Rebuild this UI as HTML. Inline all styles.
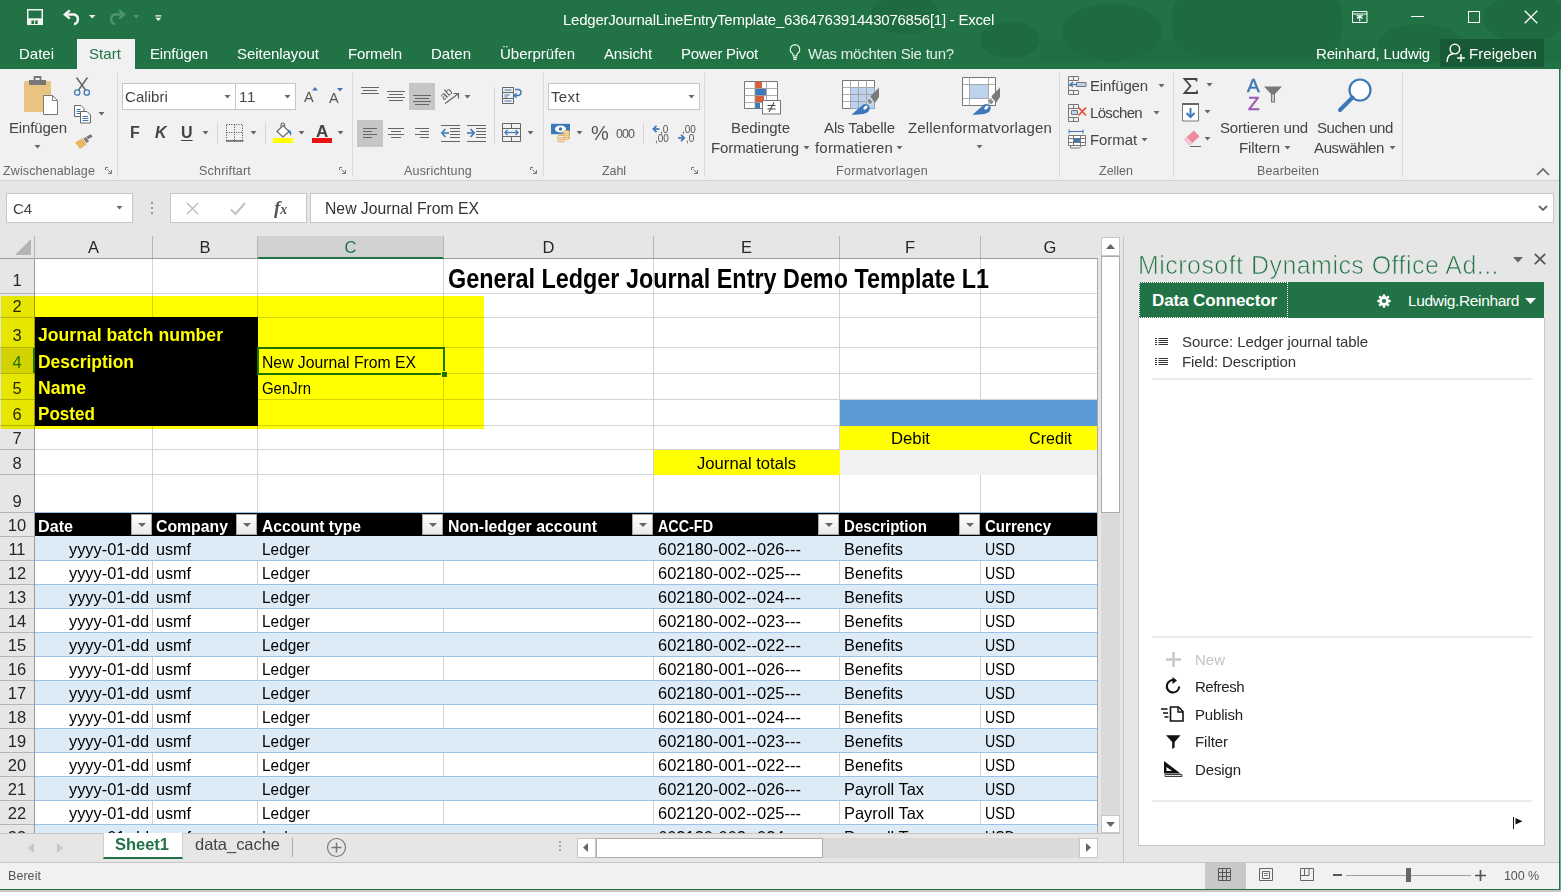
<!DOCTYPE html>
<html lang="de">
<head>
<meta charset="utf-8">
<title>LedgerJournalLineEntryTemplate - Excel</title>
<style>
*{box-sizing:border-box;margin:0;padding:0}
html,body{width:1561px;height:892px;overflow:hidden}
body{position:relative;background:#e6e6e6;font-family:"Liberation Sans",sans-serif;color:#444;font-size:15px}
.a{position:absolute;white-space:nowrap}
.t{position:absolute;white-space:nowrap;line-height:1}
svg{position:absolute;overflow:visible}
#title{left:0;top:0;width:1561px;height:69px;background:#217346;overflow:hidden}
#ribbon{left:0;top:69px;width:1561px;height:112px;background:#f1f1f1;border-bottom:1px solid #d2d2d2}
.tab{color:#fff;font-size:15px;top:46px}
.rl{font-size:14.5px;color:#444}
.gl{font-size:12.5px;color:#666;top:96px}
.sep{position:absolute;top:4px;width:1px;height:104px;background:#dadada}
.cal{font-size:16.5px;color:#000;transform-origin:0 0}
.calb{font-size:16.5px;font-weight:bold;transform-origin:0 0}
.hl{position:absolute;height:1px;background:#d4d4d4}
.vl{position:absolute;width:1px;background:#d4d4d4}
.rh{position:absolute;left:0;width:34px;text-align:center;font-size:16.5px;color:#262626;line-height:1}
.ch{position:absolute;top:239px;text-align:center;font-size:16.5px;color:#262626;line-height:1}
.fb{position:absolute;width:21px;height:21px;background:linear-gradient(#fff,#e9e9e9);border:1px solid #a6a6a6}
.fb:after{content:"";position:absolute;left:6px;top:8px;border:4px solid transparent;border-top:4px solid #666;border-bottom:0}
</style>
</head>
<body>
<div id="title" class="a">
 <svg width="1561" height="69" style="left:0;top:0">
  <g fill="#1e6b40">
   <ellipse cx="905" cy="14" rx="34" ry="20"/><ellipse cx="1010" cy="40" rx="30" ry="18"/>
   <ellipse cx="1112" cy="32" rx="50" ry="29"/>
   <rect x="1172" y="-10" width="170" height="66" rx="26"/>
   <ellipse cx="1420" cy="44" rx="42" ry="20"/><ellipse cx="1525" cy="18" rx="42" ry="24"/>
   <rect x="1040" y="40" width="521" height="22" opacity=".5"/>
  </g>
 </svg>
 <!-- QAT -->
 <svg width="16" height="16" viewBox="0 0 16 16" style="left:27px;top:9px"><path d="M.75 .75h14.500v14.500h-14.500z" fill="none" stroke="#f3f3f3" stroke-width="1.500"/><path d="M1 9.300h14v6h-14z" fill="#f3f3f3"/><path d="M4.400 11.500h6.300v3.400h-6.300z" fill="#217346"/><path d="M7 11.500h1.100v3.400h-1.100z" fill="#f3f3f3"/></svg>
 <svg width="19" height="16" viewBox="0 0 19 16" style="left:63px;top:9px"><path d="M6.800 1.300 1.800 5.500 6.800 9.700" fill="none" stroke="#f3f3f3" stroke-width="2.400"/><path d="M2.500 5.500H11.500a5 5 0 0 1 0 9.500H11" fill="none" stroke="#f3f3f3" stroke-width="2.400"/></svg>
 <svg width="7" height="4" viewBox="0 0 7 4" style="left:89px;top:15px"><path d="M0 0h6.500l-3.250 3.500z" fill="#f3f3f3"/></svg>
 <svg width="19" height="16" viewBox="0 0 19 16" style="left:107px;top:9px"><g transform="translate(19,0) scale(-1,1)"><path d="M6.800 1.300 1.800 5.500 6.800 9.700" fill="none" stroke="#4f9470" stroke-width="2.400"/><path d="M2.500 5.500H11.500a5 5 0 0 1 0 9.500H11" fill="none" stroke="#4f9470" stroke-width="2.400"/></g></svg>
 <svg width="7" height="4" viewBox="0 0 7 4" style="left:133px;top:15px"><path d="M0 0h6.500l-3.250 3.500z" fill="#4f9470"/></svg>
 <svg width="7" height="7" viewBox="0 0 7 7" style="left:155px;top:15px"><path d="M.3 .2h6v1.200h-6z M.3 2.800h6l-3 3.300z" fill="#f3f3f3"/></svg>
 <div class="t" id="ttl" style="left:563px;top:12px;color:#fff;font-size:15px;letter-spacing:-0.239px;">LedgerJournalLineEntryTemplate_636476391443076856[1] - Excel</div>
 <!-- window buttons -->
 <svg width="16" height="12" viewBox="0 0 16 12" style="left:1352px;top:11px"><path d="M.5 .5h14.500v11h-14.500z" fill="none" stroke="#fff" stroke-width="1"/><path d="M.5 3h14.500" stroke="#fff"/><path d="M7.750 10.500V5M5 7.500 7.750 5 10.500 7.500M4.500 4.700h6.500" fill="none" stroke="#fff" stroke-width="1.100"/></svg>
 <div class="a" style="left:1411px;top:16px;width:13px;height:1.4px;background:#fff"></div>
 <div class="a" style="left:1468px;top:11px;width:12px;height:12px;border:1.3px solid #fff"></div>
 <svg width="14" height="14" viewBox="0 0 14 14" style="left:1524px;top:10px"><path d="M.7 .7 13.300 13.300M13.300 .7 .7 13.300" stroke="#fff" stroke-width="1.3"/></svg>
 <!-- tabs -->
 <div class="a" style="left:77px;top:39px;width:58px;height:30px;background:#f1f1f1"></div>
 <div class="t tab" id="tb0" style="left:19px;letter-spacing:-0.006px;">Datei</div>
 <div class="t tab" id="tb1" style="left:89px;letter-spacing:0.062px;;color:#217346">Start</div>
 <div class="t tab" id="tb2" style="left:150px;letter-spacing:-0.152px;">Einfügen</div>
 <div class="t tab" id="tb3" style="left:237px;letter-spacing:-0.047px;">Seitenlayout</div>
 <div class="t tab" id="tb4" style="left:348px;letter-spacing:-0.145px;">Formeln</div>
 <div class="t tab" id="tb5" style="left:431px;letter-spacing:-0.006px;">Daten</div>
 <div class="t tab" id="tb6" style="left:500px;letter-spacing:-0.005px;">Überprüfen</div>
 <div class="t tab" id="tb7" style="left:604px;letter-spacing:-0.172px;">Ansicht</div>
 <div class="t tab" id="tb8" style="left:681px;letter-spacing:-0.277px;">Power Pivot</div>
 <svg width="12" height="18" viewBox="0 0 12 18" style="left:789px;top:44px"><path d="M6 .8a4.700 4.700 0 0 0-2.600 8.600c.6.600.8 1.200.8 2.600h3.600c0-1.400.2-2 .8-2.600A4.700 4.700 0 0 0 6 .8z" fill="none" stroke="#fff" stroke-width="1.1"/><path d="M4.200 13.600h3.600M4.500 15.400h3" stroke="#fff" stroke-width="1.100"/></svg>
 <div class="t tab" id="tb9" style="left:808px;letter-spacing:-0.218px;;color:#e3efe8">Was möchten Sie tun?</div>
 <div class="t tab" id="tb10" style="left:1316px;letter-spacing:-0.172px;">Reinhard, Ludwig</div>
 <div class="a" style="left:1440px;top:39px;width:104px;height:28px;background:#185a35"></div>
 <svg width="20" height="20" viewBox="0 0 18 18" style="left:1446px;top:43px"><circle cx="8" cy="5.500" r="4.300" fill="none" stroke="#fff" stroke-width="1.300"/><path d="M1 17c0-4.500 2.500-7 5.500-7.300M10 10.200" fill="none" stroke="#fff" stroke-width="1.300"/><path d="M13.500 10v7M10 13.500h7" stroke="#fff" stroke-width="1.300"/></svg>
 <div class="t tab" id="tb11" style="left:1469px;letter-spacing:0.050px;">Freigeben</div>
</div>
<div id="ribbon" class="a">
<!-- ===== Zwischenablage ===== -->
<svg width="36" height="40" viewBox="0 0 36 40" style="left:23px;top:7px">
 <rect x="1" y="5" width="27" height="31" rx="1.500" fill="#eac282"/>
 <path d="M6 4h17v5h-17z" fill="#777"/><path d="M11.500 1h6v4h-6z" fill="none" stroke="#777" stroke-width="1.800"/>
 <path d="M20.500 19.500h9l5 5v14h-14z" fill="#fff" stroke="#777" stroke-width="1"/><path d="M29.500 19.500v5h5" fill="none" stroke="#777" stroke-width="1"/>
</svg>
<div class="t rl" style="left:9px;top:51px;font-size:15px;letter-spacing:-0.152px;">Einfügen</div>
<svg width="8" height="5" viewBox="0 0 8 5" style="left:34px;top:76px"><path d="M.5 0h6l-3 3.500z" fill="#666"/></svg>
<svg width="18" height="20" viewBox="0 0 18 20" style="left:73px;top:8px">
 <path d="M3.500 .5 12.500 13M14.500 .5 5.500 13" stroke="#666" stroke-width="1.500" fill="none"/>
 <circle cx="4.200" cy="15.500" r="2.700" fill="none" stroke="#3f78b8" stroke-width="1.300"/><circle cx="13.800" cy="15.500" r="2.700" fill="none" stroke="#3f78b8" stroke-width="1.300"/>
</svg>
<svg width="18" height="19" viewBox="0 0 18 19" style="left:74px;top:36px">
 <path d="M.5 .5h6.500l3 3v8h-9.500z" fill="#fff" stroke="#666"/><path d="M2.500 4.500h4M2.500 6.500h5M2.500 8.500h5" stroke="#3f78b8"/>
 <path d="M6.500 6.500h6.500l3.500 3.500v8h-10z" fill="#fff" stroke="#666"/><path d="M8.500 11.500h5.500M8.500 13.500h6M8.500 15.500h6" stroke="#3f78b8"/>
</svg>
<svg width="8" height="5" viewBox="0 0 8 5" style="left:98px;top:43px"><path d="M.5 0h6l-3 3.500z" fill="#666"/></svg>
<svg width="18" height="16" viewBox="0 0 18 16" style="left:75px;top:65px">
 <path d="M0 8.500 7.500 4l4 6.500-6.500 4.500z" fill="#eab765"/><path d="M8.500 4.500 11 3l3 4.500-2.500 1.500z" fill="#777"/><path d="M11.500 2.500 16 .3l1.500 2.500-4.500 2.500z" fill="#777"/>
</svg>
<div class="t gl" style="left:3px;letter-spacing:0.118px;">Zwischenablage</div>
<svg class="ln" width="7" height="7" viewBox="0 0 7 7" style="left:105px;top:98px"><path d="M.5 3V.5H3" fill="none" stroke="#777"/><path d="M2.500 2.500 6 6M6.500 3v3.500H3" fill="none" stroke="#777"/></svg>
<div class="sep" style="left:117px"></div>
<!-- ===== Schriftart ===== -->
<div class="a" style="left:122px;top:14px;width:114px;height:27px;background:#fff;border:1px solid #c6c6c6"></div>
<div class="a" style="left:236px;top:14px;width:60px;height:27px;background:#fff;border:1px solid #c6c6c6;border-left:0"></div>
<div class="t" style="left:125px;top:20px;font-size:15px;color:#444;letter-spacing:0.069px;">Calibri</div>
<div class="t" style="left:239px;top:20px;font-size:15px;color:#444;letter-spacing:0.711px;">11</div>
<svg width="8" height="5" viewBox="0 0 8 5" style="left:224px;top:26px"><path d="M.5 0h6l-3 3.500z" fill="#666"/></svg>
<svg width="8" height="5" viewBox="0 0 8 5" style="left:284px;top:26px"><path d="M.5 0h6l-3 3.500z" fill="#666"/></svg>
<div class="t" style="left:304px;top:20.5px;font-size:14.500px;color:#555">A</div>
<svg width="6" height="4" viewBox="0 0 6 4" style="left:312px;top:18px"><path d="M0 3.500h6l-3-3.500z" fill="#3f78b8"/></svg>
<div class="t" style="left:329px;top:21.5px;font-size:14.500px;color:#555">A</div>
<svg width="6" height="4" viewBox="0 0 6 4" style="left:337px;top:19px"><path d="M0 0h6l-3 3.500z" fill="#3f78b8"/></svg>
<div class="t" style="left:130px;top:56px;font-size:16px;font-weight:bold;color:#444">F</div>
<div class="t" style="left:155px;top:56px;font-size:16px;font-weight:bold;font-style:italic;color:#444">K</div>
<div class="t" style="left:181px;top:56px;font-size:16px;font-weight:bold;color:#444;text-decoration:underline;text-underline-offset:2px">U</div>
<svg width="8" height="5" viewBox="0 0 8 5" style="left:202px;top:62px"><path d="M.5 0h6l-3 3.500z" fill="#666"/></svg>
<div class="a" style="left:217px;top:54px;width:1px;height:21px;background:#d4d4d4"></div>
<svg width="18" height="18" viewBox="0 0 18 18" style="left:226px;top:55px"><path d="M.5 .5h16v16h-16zM8.500 .5v16M.5 8.500h16" fill="none" stroke="#444" stroke-dasharray="1 1.400"/><path d="M0 17h17.500" stroke="#555" stroke-width="1.300"/></svg>
<svg width="8" height="5" viewBox="0 0 8 5" style="left:250px;top:62px"><path d="M.5 0h6l-3 3.500z" fill="#666"/></svg>
<div class="a" style="left:265px;top:54px;width:1px;height:21px;background:#d4d4d4"></div>
<svg width="22" height="16" viewBox="0 0 22 16" style="left:273px;top:54px"><path d="M4 8.500 10 2.500l6 6-6 5.500z" fill="#fff" stroke="#666" stroke-width="1.100"/><path d="M8 4.500V1.800a1.800 1.800 0 0 1 3.600 0V3.500" fill="none" stroke="#666" stroke-width="1.100"/><path d="M15.500 6.500c2.500 1 3.500 3.500 2.500 6.500-1.500-2-1.500-3.500-3.500-5z" fill="#3f78b8"/></svg>
<div class="a" style="left:273px;top:69px;width:20px;height:5px;background:#ffff00"></div>
<svg width="8" height="5" viewBox="0 0 8 5" style="left:298px;top:62px"><path d="M.5 0h6l-3 3.500z" fill="#666"/></svg>
<div class="t" style="left:316px;top:54px;font-size:17px;font-weight:bold;color:#444">A</div>
<div class="a" style="left:312px;top:69px;width:20px;height:5px;background:#ee1111"></div>
<svg width="8" height="5" viewBox="0 0 8 5" style="left:337px;top:62px"><path d="M.5 0h6l-3 3.500z" fill="#666"/></svg>
<div class="t gl" style="left:199px;letter-spacing:0.198px;">Schriftart</div>
<svg width="7" height="7" viewBox="0 0 7 7" style="left:339px;top:98px"><path d="M.5 3V.5H3" fill="none" stroke="#777"/><path d="M2.500 2.500 6 6M6.500 3v3.500H3" fill="none" stroke="#777"/></svg>
<div class="sep" style="left:352px"></div>
<!-- ===== Ausrichtung ===== -->
<div class="a" style="left:409px;top:14px;width:26px;height:27px;background:#c6c6c6"></div>
<div class="a" style="left:357px;top:51px;width:26px;height:27px;background:#c6c6c6"></div>
<svg width="18" height="8" viewBox="0 0 18 8" style="left:361px;top:18px"><path d="M0 .5h18M2 3.500h14M0 6.500h18" stroke="#666" stroke-width="1"/></svg>
<svg width="18" height="10" viewBox="0 0 18 10" style="left:387px;top:22px"><path d="M0 .5h18M2 3.500h14M0 6.500h18M2 9.500h14" stroke="#666"/></svg>
<svg width="18" height="10" viewBox="0 0 18 10" style="left:413px;top:26px"><path d="M0 .5h18M2 3.500h14M0 6.500h18M2 9.500h14" stroke="#666"/></svg>
<svg width="20" height="18" viewBox="0 0 20 18" style="left:441px;top:18px"><text x="0" y="10" font-size="11" fill="#555" font-family="Liberation Sans,sans-serif" transform="rotate(-40 6 8)">ab</text><path d="M4 16.500 17 7M12.500 6.500h5v5" fill="none" stroke="#666" stroke-width="1.200"/></svg>
<svg width="8" height="5" viewBox="0 0 8 5" style="left:464px;top:26px"><path d="M.5 0h6l-3 3.500z" fill="#666"/></svg>
<div class="a" style="left:494px;top:18px;width:1px;height:56px;background:#d4d4d4"></div>
<svg width="20" height="18" viewBox="0 0 20 18" style="left:502px;top:18px"><path d="M.5 .5h11v5h-11zM.5 5.500h11v6h-11zM.5 11.500h11v5h-11z" fill="none" stroke="#666"/><path d="M2.500 3h7M2.500 8h5M2.500 10h3M2.500 14h7" stroke="#3f78b8"/><path d="M13 2.500h3a2.500 2.500 0 0 1 0 6h-4" fill="none" stroke="#3f78b8" stroke-width="1.400"/><path d="M14.500 5.500 11 8.500l3.500 3z" fill="#3f78b8"/></svg>
<svg width="14" height="10" viewBox="0 0 14 10" style="left:363px;top:59px"><path d="M0 .5h14M0 3.500h9M0 6.500h14M0 9.500h9" stroke="#666"/></svg>
<svg width="16" height="10" viewBox="0 0 16 10" style="left:388px;top:59px"><path d="M0 .5h16M3 3.500h10M0 6.500h16M3 9.500h10" stroke="#666"/></svg>
<svg width="14" height="10" viewBox="0 0 14 10" style="left:415px;top:59px"><path d="M0 .5h14M5 3.500h9M0 6.500h14M5 9.500h9" stroke="#666"/></svg>
<svg width="19" height="17" viewBox="0 0 19 17" style="left:441px;top:56px"><path d="M0 .5h19M9 3.500h10M9 6.500h10M9 9.500h10M9 12.500h10M0 16.500h19" stroke="#666"/><path d="M1 8h7" stroke="#3f78b8" stroke-width="1.600"/><path d="M4.500 4 .8 8l3.700 4" fill="none" stroke="#3f78b8" stroke-width="1.600"/></svg>
<svg width="19" height="17" viewBox="0 0 19 17" style="left:467px;top:56px"><path d="M0 .5h19M9 3.500h10M9 6.500h10M9 9.500h10M9 12.500h10M0 16.500h19" stroke="#666"/><path d="M0 8h7" stroke="#3f78b8" stroke-width="1.600"/><path d="M3.500 4 7.200 8l-3.700 4" fill="none" stroke="#3f78b8" stroke-width="1.600"/></svg>
<svg width="20" height="19" viewBox="0 0 20 19" style="left:502px;top:54px"><path d="M.5 .5h18v18h-18zM.5 5.500h18M.5 13.500h18M9.500 .5v5M9.500 13.500v5" fill="none" stroke="#666"/><path d="M3 9.500h13" stroke="#3f78b8" stroke-width="1.300"/><path d="M5.500 7 3 9.500 5.500 12M13.500 7 16 9.500 13.500 12" fill="none" stroke="#3f78b8" stroke-width="1.300"/></svg>
<svg width="8" height="5" viewBox="0 0 8 5" style="left:527px;top:62px"><path d="M.5 0h6l-3 3.500z" fill="#666"/></svg>
<div class="t gl" style="left:404px;letter-spacing:0.180px;">Ausrichtung</div>
<svg width="7" height="7" viewBox="0 0 7 7" style="left:530px;top:98px"><path d="M.5 3V.5H3" fill="none" stroke="#777"/><path d="M2.500 2.500 6 6M6.500 3v3.500H3" fill="none" stroke="#777"/></svg>
<div class="sep" style="left:543px"></div>
<!-- ===== Zahl ===== -->
<div class="a" style="left:548px;top:14px;width:152px;height:27px;background:#fff;border:1px solid #c6c6c6"></div>
<div class="t" style="left:551px;top:20px;font-size:15px;color:#444;letter-spacing:0.371px;">Text</div>
<svg width="8" height="5" viewBox="0 0 8 5" style="left:688px;top:26px"><path d="M.5 0h6l-3 3.500z" fill="#666"/></svg>
<svg width="21" height="20" viewBox="0 0 21 20" style="left:551px;top:54px"><path d="M0 .8h19v10.400h-19z" fill="#3f78b8"/><ellipse cx="9.500" cy="6" rx="5.600" ry="3.500" fill="#fff"/><circle cx="9.500" cy="6" r="1.800" fill="#3f78b8"/><g fill="#f1f1f1" stroke="#e4a951" stroke-width="1"><ellipse cx="15.300" cy="15" rx="3.600" ry="1.300"/><ellipse cx="15.300" cy="13" rx="3.600" ry="1.300"/><ellipse cx="15.300" cy="11" rx="3.600" ry="1.300"/><ellipse cx="15.300" cy="9" rx="3.600" ry="1.300"/><ellipse cx="10" cy="17.600" rx="3.600" ry="1.300"/><ellipse cx="10" cy="15.600" rx="3.600" ry="1.300"/><ellipse cx="10" cy="13.600" rx="3.600" ry="1.300"/></g></svg>
<svg width="8" height="5" viewBox="0 0 8 5" style="left:576px;top:62px"><path d="M.5 0h6l-3 3.500z" fill="#666"/></svg>
<div class="t" style="left:591px;top:54px;font-size:20px;color:#555;letter-spacing:-0.797px;">%</div>
<div class="t" style="left:616px;top:59px;font-size:12.500px;color:#555;letter-spacing:-0.953px;">000</div>
<div class="a" style="left:643px;top:54px;width:1px;height:21px;background:#d4d4d4"></div>
<svg width="18" height="18" viewBox="0 0 18 18" style="left:652px;top:55px"><path d="M1.500 5h6" stroke="#3f78b8" stroke-width="1.700"/><path d="M4.500 1.800 1.300 5l3.200 3.200" fill="none" stroke="#3f78b8" stroke-width="1.700"/><text x="8" y="8.500" font-size="10" fill="#555" font-family="Liberation Sans,sans-serif">,0</text><text x="3" y="17.500" font-size="10" fill="#555" font-family="Liberation Sans,sans-serif">,00</text></svg>
<svg width="18" height="18" viewBox="0 0 18 18" style="left:678px;top:55px"><path d="M0 14h6" stroke="#3f78b8" stroke-width="1.700"/><path d="M3 10.800 6.200 14 3 17.200" fill="none" stroke="#3f78b8" stroke-width="1.700"/><text x="4" y="8.500" font-size="10" fill="#555" font-family="Liberation Sans,sans-serif">,00</text><text x="8" y="17.500" font-size="10" fill="#555" font-family="Liberation Sans,sans-serif">,0</text></svg>
<div class="t gl" style="left:602px;letter-spacing:-0.082px;">Zahl</div>
<svg width="7" height="7" viewBox="0 0 7 7" style="left:691px;top:98px"><path d="M.5 3V.5H3" fill="none" stroke="#777"/><path d="M2.500 2.500 6 6M6.500 3v3.500H3" fill="none" stroke="#777"/></svg>
<div class="sep" style="left:704px"></div>
<!-- ===== Formatvorlagen ===== -->
<svg width="38" height="34" viewBox="0 0 38 34" style="left:744px;top:12px">
 <path d="M.5 .5h33v27h-33z" fill="#fff" stroke="#777"/>
 <path d="M11 .5h7v7h-7z" fill="#d8603a"/><path d="M11 7.500h11v7h-11z" fill="#3f78b8"/><path d="M11 14.500h9v7h-9z" fill="#d8603a"/><path d="M11 21.500h5v6h-5z" fill="#3f78b8"/>
 <path d="M.5 7.500h33M.5 14.500h33M.5 21.500h33M11 .5v27M22.500 .5v27" fill="none" stroke="#999" stroke-width=".8"/>
 <path d="M18.500 19.500h18v13.500h-18z" fill="#fff" stroke="#777"/>
 <path d="M23.500 24.500h8M23.500 28h8M30 21.500l-5 9.500" stroke="#444" stroke-width="1.100"/>
</svg>
<div class="t rl" style="left:731px;top:51px;font-size:15px;letter-spacing:-0.027px;">Bedingte</div>
<div class="t rl" style="left:711px;top:71px;font-size:15px;letter-spacing:-0.100px;">Formatierung</div>
<svg width="8" height="5" viewBox="0 0 8 5" style="left:803px;top:77px"><path d="M.5 0h6l-3 3.500z" fill="#666"/></svg>
<svg width="40" height="36" viewBox="0 0 40 36" style="left:842px;top:11px">
 <path d="M.5 .5h32v28h-32z" fill="#fff" stroke="#777"/><path d="M8.500 7.500h24v21h-24z" fill="#bdd2ec"/>
 <path d="M.5 7.500h32M.5 14.500h32M.5 21.500h32M8.500 .5v28M16.500 .5v28M24.500 .5v28" fill="none" stroke="#999" stroke-width=".8"/>
 <g transform="translate(0,0)"><path d="M28.300 16.300 37 7.500V17L33 23z" fill="#7a7a7a"/><path d="M27.300 18l3.800 3.800-3 3-3.800-3.800z" fill="#8a8a8a" stroke="#f1f1f1" stroke-width=".9"/><path d="M9.500 34.700 21 24.500C25 22.500 29.500 26 27 30.500 25 34 20 34.700 9.500 34.700z" fill="#3f78b8"/><ellipse cx="23.400" cy="27.600" rx="2.500" ry="1.400" transform="rotate(-40 23.400 27.600)" fill="#fff"/></g>
</svg>
<div class="t rl" style="left:824px;top:51px;font-size:15px;letter-spacing:-0.116px;">Als Tabelle</div>
<div class="t rl" style="left:815px;top:71px;font-size:15px;letter-spacing:0.193px;">formatieren</div>
<svg width="8" height="5" viewBox="0 0 8 5" style="left:896px;top:77px"><path d="M.5 0h6l-3 3.500z" fill="#666"/></svg>
<svg width="40" height="38" viewBox="0 0 40 38" style="left:962px;top:8px">
 <path d="M.5 .5h33v28h-33z" fill="#fff" stroke="#777"/><path d="M7.500 7.500h19v14h-19z" fill="#bdd2ec"/>
 <path d="M.5 7.500h33M.5 21.500h33M7.500 .5v28M26.500 .5v28" fill="none" stroke="#999" stroke-width=".8"/>
 <g transform="translate(1,3)"><path d="M28.300 16.300 37 7.500V17L33 23z" fill="#7a7a7a"/><path d="M27.300 18l3.800 3.800-3 3-3.800-3.800z" fill="#8a8a8a" stroke="#f1f1f1" stroke-width=".9"/><path d="M9.500 34.700 21 24.500C25 22.500 29.500 26 27 30.500 25 34 20 34.700 9.500 34.700z" fill="#3f78b8"/><ellipse cx="23.400" cy="27.600" rx="2.500" ry="1.400" transform="rotate(-40 23.400 27.600)" fill="#fff"/></g>
</svg>
<div class="t rl" style="left:908px;top:51px;font-size:15px;letter-spacing:0.155px;">Zellenformatvorlagen</div>
<svg width="8" height="5" viewBox="0 0 8 5" style="left:976px;top:76px"><path d="M.5 0h6l-3 3.500z" fill="#666"/></svg>
<div class="t gl" style="left:836px;letter-spacing:0.318px;">Formatvorlagen</div>
<div class="sep" style="left:1059px"></div>
<!-- ===== Zellen ===== -->
<svg width="19" height="19" viewBox="0 0 19 19" style="left:1068px;top:7px"><path d="M.5 .5h10v4h-10zM.5 14.500h10v4h-10zM.5 4.500v10M5.500 .5v4M5.500 14.500v4M.5 9.500h3" fill="none" stroke="#777"/><path d="M8.500 6.500h9.500v4h-9.500z" fill="#bdd2ec" stroke="#777"/><path d="M2.500 8.500h6" stroke="#3f78b8" stroke-width="1.400"/><path d="M5 6 2.300 8.500 5 11" fill="none" stroke="#3f78b8" stroke-width="1.400"/></svg>
<div class="t rl" style="left:1090px;top:9px;font-size:15px;letter-spacing:-0.152px;">Einfügen</div>
<svg width="8" height="5" viewBox="0 0 8 5" style="left:1158px;top:15px"><path d="M.5 0h6l-3 3.500z" fill="#666"/></svg>
<svg width="20" height="18" viewBox="0 0 20 18" style="left:1068px;top:35px"><path d="M.5 .5h10v4h-10zM.5 13.500h10v4h-10zM.5 4.500v9M5.500 .5v4M5.500 13.500v4" fill="none" stroke="#777"/><path d="M3.500 6.500h6v4h-6z" fill="#bdd2ec" stroke="#777"/><path d="M10.500 3.500 18 11.500M18 3.500 10.500 11.500" stroke="#e0502a" stroke-width="1.700"/></svg>
<div class="t rl" style="left:1090px;top:36px;font-size:15px;letter-spacing:-0.674px;">Löschen</div>
<svg width="8" height="5" viewBox="0 0 8 5" style="left:1153px;top:42px"><path d="M.5 0h6l-3 3.500z" fill="#666"/></svg>
<svg width="19" height="20" viewBox="0 0 19 20" style="left:1068px;top:60px"><path d="M1 2.500h14M1 .5v4M15 .5v4" stroke="#3f78b8" fill="none"/><path d="M.5 6.500h17v10h-17zM.5 9.500h17M.5 13.500h17M5.500 6.500v10M12.500 6.500v10" fill="#fff" stroke="#777"/><path d="M6 10h6v3h-6z" fill="#3f78b8"/><path d="M2.500 16.500v2.500h9l2-2.500" fill="none" stroke="#777"/></svg>
<div class="t rl" style="left:1090px;top:63px;font-size:15px;letter-spacing:-0.086px;">Format</div>
<svg width="8" height="5" viewBox="0 0 8 5" style="left:1141px;top:69px"><path d="M.5 0h6l-3 3.500z" fill="#666"/></svg>
<div class="t gl" style="left:1099px;letter-spacing:-0.008px;">Zellen</div>
<div class="sep" style="left:1173px"></div>
<!-- ===== Bearbeiten ===== -->
<svg width="15" height="16" viewBox="0 0 15 16" style="left:1183px;top:9px"><path d="M13.500 3.500V1H1.500l6 7-6 7h12.500v-2.500" fill="none" stroke="#444" stroke-width="1.800"/></svg>
<svg width="8" height="5" viewBox="0 0 8 5" style="left:1206px;top:14px"><path d="M.5 0h6l-3 3.500z" fill="#666"/></svg>
<svg width="18" height="19" viewBox="0 0 18 19" style="left:1182px;top:34px"><path d="M.5 1.500h16v16.500h-16z" fill="#fff" stroke="#777"/><path d="M0 1h17" stroke="#666" stroke-width="2"/><path d="M8.500 5v9" stroke="#3f78b8" stroke-width="2"/><path d="M4.500 10 8.500 14l4-4" fill="none" stroke="#3f78b8" stroke-width="2"/></svg>
<svg width="8" height="5" viewBox="0 0 8 5" style="left:1204px;top:41px"><path d="M.5 0h6l-3 3.500z" fill="#666"/></svg>
<svg width="19" height="19" viewBox="0 0 19 19" style="left:1183px;top:60px"><path d="M1 10.500 11 1.500l5.500 6-10 9z" fill="#ee8a9f"/><path d="M1 10.500 4 8l5.500 6-3 2.500z" fill="#f7c5cf"/><path d="M7 17.500h11" stroke="#666" stroke-width="1"/></svg>
<svg width="8" height="5" viewBox="0 0 8 5" style="left:1204px;top:68px"><path d="M.5 0h6l-3 3.500z" fill="#666"/></svg>
<div class="t" style="left:1247px;top:7px;font-size:19px;color:#3f78b8;-webkit-text-stroke:.5px #3f78b8">A</div>
<div class="t" style="left:1248px;top:24.5px;font-size:19px;color:#9b59b6;-webkit-text-stroke:.5px #9b59b6">Z</div>
<svg width="18" height="17" viewBox="0 0 18 17" style="left:1264px;top:17px"><path d="M0 .5h18l-7 7.500v8.500h-4v-8.500z" fill="#777"/><path d="M8.300 8.500v7h1.400v-7" fill="#f1f1f1"/></svg>
<div class="t rl" style="left:1220px;top:51px;font-size:15px;letter-spacing:-0.159px;">Sortieren und</div>
<div class="t rl" style="left:1239px;top:71px;font-size:15px;letter-spacing:-0.098px;">Filtern</div>
<svg width="8" height="5" viewBox="0 0 8 5" style="left:1284px;top:77px"><path d="M.5 0h6l-3 3.500z" fill="#666"/></svg>
<svg width="35" height="35" viewBox="0 0 35 35" style="left:1338px;top:9px"><circle cx="22" cy="12" r="10.500" fill="#fff" stroke="#3f78b8" stroke-width="2.200"/><path d="M14.500 19.500 2 32" stroke="#3f78b8" stroke-width="4" stroke-linecap="round"/></svg>
<div class="t rl" style="left:1317px;top:51px;font-size:15px;letter-spacing:-0.408px;">Suchen und</div>
<div class="t rl" style="left:1314px;top:71px;font-size:15px;letter-spacing:-0.377px;">Auswählen</div>
<svg width="8" height="5" viewBox="0 0 8 5" style="left:1389px;top:77px"><path d="M.5 0h6l-3 3.500z" fill="#666"/></svg>
<div class="t gl" style="left:1257px;letter-spacing:0.153px;">Bearbeiten</div>
<div class="sep" style="left:1402px"></div>
<svg width="14" height="8" viewBox="0 0 14 8" style="left:1536px;top:99px"><path d="M1 7 7 1l6 6" fill="none" stroke="#666" stroke-width="1.600"/></svg>
</div>
<!-- ===== formula bar ===== -->
<div class="a" style="left:6px;top:193px;width:127px;height:30px;background:#fff;border:1px solid #c6c6c6"></div>
<div class="t" style="left:13px;top:201px;font-size:15px;color:#444;letter-spacing:-0.094px;">C4</div>
<svg width="8" height="5" viewBox="0 0 8 5" style="left:116px;top:206px"><path d="M.5 0h6l-3 3.500z" fill="#666"/></svg>
<div class="a" style="left:151px;top:202px;width:2px;height:2px;background:#9a9a9a;box-shadow:0 5px #9a9a9a,0 10px #9a9a9a"></div>
<div class="a" style="left:170px;top:193px;width:137px;height:30px;background:#fff;border:1px solid #c6c6c6"></div>
<svg width="13" height="13" viewBox="0 0 13 13" style="left:186px;top:202px"><path d="M1 1 12 12M12 1 1 12" stroke="#c0c0c0" stroke-width="1.500"/></svg>
<svg width="16" height="13" viewBox="0 0 16 13" style="left:230px;top:202px"><path d="M1 7.500 5.500 12 15 1" fill="none" stroke="#c0c0c0" stroke-width="2"/></svg>
<div class="t" style="left:274px;top:198px;font-size:19px;font-weight:bold;font-style:italic;font-family:'Liberation Serif',serif;color:#555"><i>f</i><span style="font-size:14px">x</span></div>
<div class="a" style="left:310px;top:193px;width:1244px;height:30px;background:#fff;border:1px solid #c6c6c6"></div>
<div class="t cal" style="left:325px;top:200px;color:#333;transform:scaleX(0.9542);">New Journal From EX</div>
<svg width="10" height="6" viewBox="0 0 10 6" style="left:1538px;top:205px"><path d="M1 1 5 5l4-4" fill="none" stroke="#666" stroke-width="1.800"/></svg>
<!-- ===== grid ===== -->
<div id="grid" class="a" style="left:0;top:0;width:1120px;height:833px;overflow:hidden">
<div class="a" style="left:35px;top:259px;width:1063px;height:574px;background:#fff"></div>
<div class="a" style="left:0;top:236px;width:1098px;height:23px;background:#e6e6e6;border-bottom:1px solid #9b9b9b"></div>
<div class="a" style="left:258px;top:236px;width:186px;height:23px;background:#d2d2d2;border-bottom:2px solid #217346"></div>
<div class="ch" style="left:35px;width:117px;color:#262626">A</div>
<div class="vl" style="left:152px;top:236px;height:22px;background:#b5b5b5"></div>
<div class="ch" style="left:153px;width:104px;color:#262626">B</div>
<div class="vl" style="left:257px;top:236px;height:22px;background:#b5b5b5"></div>
<div class="ch" style="left:258px;width:185px;color:#217346">C</div>
<div class="vl" style="left:443px;top:236px;height:22px;background:#b5b5b5"></div>
<div class="ch" style="left:444px;width:209px;color:#262626">D</div>
<div class="vl" style="left:653px;top:236px;height:22px;background:#b5b5b5"></div>
<div class="ch" style="left:654px;width:185px;color:#262626">E</div>
<div class="vl" style="left:839px;top:236px;height:22px;background:#b5b5b5"></div>
<div class="ch" style="left:840px;width:140px;color:#262626">F</div>
<div class="vl" style="left:980px;top:236px;height:22px;background:#b5b5b5"></div>
<div class="ch" style="left:981px;width:138px;color:#262626">G</div>
<svg width="16" height="16" viewBox="0 0 16 16" style="left:15px;top:239px"><path d="M16 0v16H0z" fill="#b4b4b4"/></svg>
<div class="vl" style="left:34px;top:236px;height:23px;background:#b5b5b5"></div>
<div class="a" style="left:0;top:259px;width:35px;height:574px;background:#e6e6e6;border-right:1px solid #9b9b9b"></div>
<div class="a" style="left:0;top:348px;width:35px;height:25px;background:#d2d2d2;border-right:2px solid #217346"></div>
<div class="rh" style="top:272px;color:#262626">1</div>
<div class="hl" style="left:0;top:293px;width:34px;background:#b5b5b5"></div>
<div class="rh" style="top:297.5px;color:#262626">2</div>
<div class="hl" style="left:0;top:317px;width:34px;background:#b5b5b5"></div>
<div class="rh" style="top:327px;color:#262626">3</div>
<div class="hl" style="left:0;top:347px;width:34px;background:#b5b5b5"></div>
<div class="rh" style="top:353.5px;color:#217346">4</div>
<div class="hl" style="left:0;top:373px;width:34px;background:#b5b5b5"></div>
<div class="rh" style="top:379.5px;color:#262626">5</div>
<div class="hl" style="left:0;top:399px;width:34px;background:#b5b5b5"></div>
<div class="rh" style="top:405.5px;color:#262626">6</div>
<div class="hl" style="left:0;top:425px;width:34px;background:#b5b5b5"></div>
<div class="rh" style="top:429.5px;color:#262626">7</div>
<div class="hl" style="left:0;top:449px;width:34px;background:#b5b5b5"></div>
<div class="rh" style="top:454.5px;color:#262626">8</div>
<div class="hl" style="left:0;top:474px;width:34px;background:#b5b5b5"></div>
<div class="rh" style="top:492.5px;color:#262626">9</div>
<div class="hl" style="left:0;top:512px;width:34px;background:#b5b5b5"></div>
<div class="rh" style="top:516.5px;color:#262626">10</div>
<div class="hl" style="left:0;top:536px;width:34px;background:#b5b5b5"></div>
<div class="rh" style="top:540.5px;color:#262626">11</div>
<div class="hl" style="left:0;top:560px;width:34px;background:#b5b5b5"></div>
<div class="rh" style="top:564.5px;color:#262626">12</div>
<div class="hl" style="left:0;top:584px;width:34px;background:#b5b5b5"></div>
<div class="rh" style="top:588.5px;color:#262626">13</div>
<div class="hl" style="left:0;top:608px;width:34px;background:#b5b5b5"></div>
<div class="rh" style="top:612.5px;color:#262626">14</div>
<div class="hl" style="left:0;top:632px;width:34px;background:#b5b5b5"></div>
<div class="rh" style="top:636.5px;color:#262626">15</div>
<div class="hl" style="left:0;top:656px;width:34px;background:#b5b5b5"></div>
<div class="rh" style="top:660.5px;color:#262626">16</div>
<div class="hl" style="left:0;top:680px;width:34px;background:#b5b5b5"></div>
<div class="rh" style="top:684.5px;color:#262626">17</div>
<div class="hl" style="left:0;top:704px;width:34px;background:#b5b5b5"></div>
<div class="rh" style="top:708.5px;color:#262626">18</div>
<div class="hl" style="left:0;top:728px;width:34px;background:#b5b5b5"></div>
<div class="rh" style="top:732.5px;color:#262626">19</div>
<div class="hl" style="left:0;top:752px;width:34px;background:#b5b5b5"></div>
<div class="rh" style="top:756.5px;color:#262626">20</div>
<div class="hl" style="left:0;top:776px;width:34px;background:#b5b5b5"></div>
<div class="rh" style="top:780.5px;color:#262626">21</div>
<div class="hl" style="left:0;top:800px;width:34px;background:#b5b5b5"></div>
<div class="rh" style="top:804.5px;color:#262626">22</div>
<div class="hl" style="left:0;top:824px;width:34px;background:#b5b5b5"></div>
<div class="rh" style="top:828.5px;color:#262626">23</div>
<div class="hl" style="left:0;top:848px;width:34px;background:#b5b5b5"></div>
<div class="hl" style="left:35px;top:293px;width:1062px"></div>
<div class="hl" style="left:35px;top:317px;width:1062px"></div>
<div class="hl" style="left:35px;top:347px;width:1062px"></div>
<div class="hl" style="left:35px;top:373px;width:1062px"></div>
<div class="hl" style="left:35px;top:399px;width:1062px"></div>
<div class="hl" style="left:35px;top:425px;width:1062px"></div>
<div class="hl" style="left:35px;top:449px;width:1062px"></div>
<div class="hl" style="left:35px;top:474px;width:1062px"></div>
<div class="vl" style="left:152px;top:259px;height:253px"></div>
<div class="vl" style="left:257px;top:259px;height:253px"></div>
<div class="vl" style="left:443px;top:259px;height:253px"></div>
<div class="vl" style="left:653px;top:259px;height:253px"></div>
<div class="vl" style="left:839px;top:259px;height:253px"></div>
<div class="vl" style="left:980px;top:259px;height:253px"></div>
<div class="a" style="left:35px;top:317px;width:223px;height:109px;background:#000"></div>
<div class="a" style="left:840px;top:400px;width:258px;height:26px;background:#5b9bd5"></div>
<div class="a" style="left:840px;top:426px;width:258px;height:24px;background:#ffff00"></div>
<div class="a" style="left:654px;top:450px;width:186px;height:25px;background:#ffff00"></div>
<div class="a" style="left:840px;top:450px;width:258px;height:25px;background:#f2f2f2"></div>
<div class="t" style="left:448px;top:265.5px;font-size:27px;font-weight:bold;color:#000;transform-origin:0 0;transform:scaleX(0.8654);">General Ledger Journal Entry Demo Template L1</div>
<div class="t calb" style="left:38px;top:327px;color:#ffff00;font-size:17.5px;transform:scaleX(1.0066);">Journal batch number</div>
<div class="t calb" style="left:38px;top:353.5px;color:#ffff00;font-size:17.5px;transform:scaleX(0.9971);">Description</div>
<div class="t calb" style="left:38px;top:379.5px;color:#ffff00;font-size:17.5px;transform:scaleX(1.0069);">Name</div>
<div class="t calb" style="left:38px;top:406px;color:#ffff00;font-size:17.5px;transform:scaleX(0.9767);">Posted</div>
<div class="t cal" style="left:262px;top:354px;transform:scaleX(0.9542);">New Journal From EX</div>
<div class="t cal" style="left:262px;top:380px;transform:scaleX(0.9056);">GenJrn</div>
<div class="t cal" style="left:891px;top:430px;transform:scaleX(1.0122);">Debit</div>
<div class="t cal" style="left:1029px;top:430px;transform:scaleX(0.9769);">Credit</div>
<div class="t cal" style="left:697px;top:455px;transform:scaleX(1.0088);">Journal totals</div>
<div class="a" style="left:257px;top:347px;width:188px;height:28px;border:2px solid #217346"></div>
<div class="a" style="left:441px;top:371px;width:6px;height:6px;background:#217346;border:1px solid #fff;border-right:0;border-bottom:0"></div>
<div class="hl" style="left:35px;top:512px;width:1063px;background:#9bc2e6"></div>
<div class="a" style="left:35px;top:513px;width:1063px;height:23px;background:#000"></div>
<div class="t calb" style="left:38px;top:518px;color:#fff;transform:scaleX(0.9786);">Date</div>
<div class="fb" style="left:131px;top:514px"></div>
<div class="t calb" style="left:156px;top:518px;color:#fff;transform:scaleX(0.9576);">Company</div>
<div class="fb" style="left:236px;top:514px"></div>
<div class="t calb" style="left:261.5px;top:518px;color:#fff;transform:scaleX(0.9472);">Account type</div>
<div class="fb" style="left:422px;top:514px"></div>
<div class="t calb" style="left:448px;top:518px;color:#fff;transform:scaleX(0.9617);">Non-ledger account</div>
<div class="fb" style="left:632px;top:514px"></div>
<div class="t calb" style="left:658px;top:518px;color:#fff;transform:scaleX(0.8696);">ACC-FD</div>
<div class="fb" style="left:818px;top:514px"></div>
<div class="t calb" style="left:844px;top:518px;color:#fff;transform:scaleX(0.9143);">Description</div>
<div class="fb" style="left:959px;top:514px"></div>
<div class="t calb" style="left:985px;top:518px;color:#fff;transform:scaleX(0.9109);">Currency</div>
<div class="a" style="left:35px;top:536px;width:1063px;height:24px;background:#ddebf7"></div>
<div class="hl" style="left:35px;top:560px;width:1063px;background:#9bc2e6"></div>
<div class="t cal" style="left:69px;top:541px;transform:scaleX(0.9913);">yyyy-01-dd</div>
<div class="t cal" style="left:156px;top:541px;transform:scaleX(0.9786);">usmf</div>
<div class="t cal" style="left:262px;top:541px;transform:scaleX(0.9340);">Ledger</div>
<div class="t cal" style="left:658px;top:541px;transform:scaleX(0.9993);">602180-002--026---</div>
<div class="t cal" style="left:844px;top:541px;transform:scaleX(0.9895);">Benefits</div>
<div class="t cal" style="left:985px;top:541px;transform:scaleX(0.8610);">USD</div>
<div class="vl" style="left:152px;top:561px;height:23px"></div>
<div class="vl" style="left:257px;top:561px;height:23px"></div>
<div class="vl" style="left:443px;top:561px;height:23px"></div>
<div class="vl" style="left:653px;top:561px;height:23px"></div>
<div class="vl" style="left:839px;top:561px;height:23px"></div>
<div class="vl" style="left:980px;top:561px;height:23px"></div>
<div class="hl" style="left:35px;top:584px;width:1063px;background:#9bc2e6"></div>
<div class="t cal" style="left:69px;top:565px;transform:scaleX(0.9913);">yyyy-01-dd</div>
<div class="t cal" style="left:156px;top:565px;transform:scaleX(0.9786);">usmf</div>
<div class="t cal" style="left:262px;top:565px;transform:scaleX(0.9340);">Ledger</div>
<div class="t cal" style="left:658px;top:565px;transform:scaleX(0.9993);">602180-002--025---</div>
<div class="t cal" style="left:844px;top:565px;transform:scaleX(0.9895);">Benefits</div>
<div class="t cal" style="left:985px;top:565px;transform:scaleX(0.8610);">USD</div>
<div class="a" style="left:35px;top:585px;width:1063px;height:23px;background:#ddebf7"></div>
<div class="hl" style="left:35px;top:608px;width:1063px;background:#9bc2e6"></div>
<div class="t cal" style="left:69px;top:589px;transform:scaleX(0.9913);">yyyy-01-dd</div>
<div class="t cal" style="left:156px;top:589px;transform:scaleX(0.9786);">usmf</div>
<div class="t cal" style="left:262px;top:589px;transform:scaleX(0.9340);">Ledger</div>
<div class="t cal" style="left:658px;top:589px;transform:scaleX(0.9993);">602180-002--024---</div>
<div class="t cal" style="left:844px;top:589px;transform:scaleX(0.9895);">Benefits</div>
<div class="t cal" style="left:985px;top:589px;transform:scaleX(0.8610);">USD</div>
<div class="vl" style="left:152px;top:609px;height:23px"></div>
<div class="vl" style="left:257px;top:609px;height:23px"></div>
<div class="vl" style="left:443px;top:609px;height:23px"></div>
<div class="vl" style="left:653px;top:609px;height:23px"></div>
<div class="vl" style="left:839px;top:609px;height:23px"></div>
<div class="vl" style="left:980px;top:609px;height:23px"></div>
<div class="hl" style="left:35px;top:632px;width:1063px;background:#9bc2e6"></div>
<div class="t cal" style="left:69px;top:613px;transform:scaleX(0.9913);">yyyy-01-dd</div>
<div class="t cal" style="left:156px;top:613px;transform:scaleX(0.9786);">usmf</div>
<div class="t cal" style="left:262px;top:613px;transform:scaleX(0.9340);">Ledger</div>
<div class="t cal" style="left:658px;top:613px;transform:scaleX(0.9993);">602180-002--023---</div>
<div class="t cal" style="left:844px;top:613px;transform:scaleX(0.9895);">Benefits</div>
<div class="t cal" style="left:985px;top:613px;transform:scaleX(0.8610);">USD</div>
<div class="a" style="left:35px;top:633px;width:1063px;height:23px;background:#ddebf7"></div>
<div class="hl" style="left:35px;top:656px;width:1063px;background:#9bc2e6"></div>
<div class="t cal" style="left:69px;top:637px;transform:scaleX(0.9913);">yyyy-01-dd</div>
<div class="t cal" style="left:156px;top:637px;transform:scaleX(0.9786);">usmf</div>
<div class="t cal" style="left:262px;top:637px;transform:scaleX(0.9340);">Ledger</div>
<div class="t cal" style="left:658px;top:637px;transform:scaleX(0.9993);">602180-002--022---</div>
<div class="t cal" style="left:844px;top:637px;transform:scaleX(0.9895);">Benefits</div>
<div class="t cal" style="left:985px;top:637px;transform:scaleX(0.8610);">USD</div>
<div class="vl" style="left:152px;top:657px;height:23px"></div>
<div class="vl" style="left:257px;top:657px;height:23px"></div>
<div class="vl" style="left:443px;top:657px;height:23px"></div>
<div class="vl" style="left:653px;top:657px;height:23px"></div>
<div class="vl" style="left:839px;top:657px;height:23px"></div>
<div class="vl" style="left:980px;top:657px;height:23px"></div>
<div class="hl" style="left:35px;top:680px;width:1063px;background:#9bc2e6"></div>
<div class="t cal" style="left:69px;top:661px;transform:scaleX(0.9913);">yyyy-01-dd</div>
<div class="t cal" style="left:156px;top:661px;transform:scaleX(0.9786);">usmf</div>
<div class="t cal" style="left:262px;top:661px;transform:scaleX(0.9340);">Ledger</div>
<div class="t cal" style="left:658px;top:661px;transform:scaleX(0.9993);">602180-001--026---</div>
<div class="t cal" style="left:844px;top:661px;transform:scaleX(0.9895);">Benefits</div>
<div class="t cal" style="left:985px;top:661px;transform:scaleX(0.8610);">USD</div>
<div class="a" style="left:35px;top:681px;width:1063px;height:23px;background:#ddebf7"></div>
<div class="hl" style="left:35px;top:704px;width:1063px;background:#9bc2e6"></div>
<div class="t cal" style="left:69px;top:685px;transform:scaleX(0.9913);">yyyy-01-dd</div>
<div class="t cal" style="left:156px;top:685px;transform:scaleX(0.9786);">usmf</div>
<div class="t cal" style="left:262px;top:685px;transform:scaleX(0.9340);">Ledger</div>
<div class="t cal" style="left:658px;top:685px;transform:scaleX(0.9993);">602180-001--025---</div>
<div class="t cal" style="left:844px;top:685px;transform:scaleX(0.9895);">Benefits</div>
<div class="t cal" style="left:985px;top:685px;transform:scaleX(0.8610);">USD</div>
<div class="vl" style="left:152px;top:705px;height:23px"></div>
<div class="vl" style="left:257px;top:705px;height:23px"></div>
<div class="vl" style="left:443px;top:705px;height:23px"></div>
<div class="vl" style="left:653px;top:705px;height:23px"></div>
<div class="vl" style="left:839px;top:705px;height:23px"></div>
<div class="vl" style="left:980px;top:705px;height:23px"></div>
<div class="hl" style="left:35px;top:728px;width:1063px;background:#9bc2e6"></div>
<div class="t cal" style="left:69px;top:709px;transform:scaleX(0.9913);">yyyy-01-dd</div>
<div class="t cal" style="left:156px;top:709px;transform:scaleX(0.9786);">usmf</div>
<div class="t cal" style="left:262px;top:709px;transform:scaleX(0.9340);">Ledger</div>
<div class="t cal" style="left:658px;top:709px;transform:scaleX(0.9993);">602180-001--024---</div>
<div class="t cal" style="left:844px;top:709px;transform:scaleX(0.9895);">Benefits</div>
<div class="t cal" style="left:985px;top:709px;transform:scaleX(0.8610);">USD</div>
<div class="a" style="left:35px;top:729px;width:1063px;height:23px;background:#ddebf7"></div>
<div class="hl" style="left:35px;top:752px;width:1063px;background:#9bc2e6"></div>
<div class="t cal" style="left:69px;top:733px;transform:scaleX(0.9913);">yyyy-01-dd</div>
<div class="t cal" style="left:156px;top:733px;transform:scaleX(0.9786);">usmf</div>
<div class="t cal" style="left:262px;top:733px;transform:scaleX(0.9340);">Ledger</div>
<div class="t cal" style="left:658px;top:733px;transform:scaleX(0.9993);">602180-001--023---</div>
<div class="t cal" style="left:844px;top:733px;transform:scaleX(0.9895);">Benefits</div>
<div class="t cal" style="left:985px;top:733px;transform:scaleX(0.8610);">USD</div>
<div class="vl" style="left:152px;top:753px;height:23px"></div>
<div class="vl" style="left:257px;top:753px;height:23px"></div>
<div class="vl" style="left:443px;top:753px;height:23px"></div>
<div class="vl" style="left:653px;top:753px;height:23px"></div>
<div class="vl" style="left:839px;top:753px;height:23px"></div>
<div class="vl" style="left:980px;top:753px;height:23px"></div>
<div class="hl" style="left:35px;top:776px;width:1063px;background:#9bc2e6"></div>
<div class="t cal" style="left:69px;top:757px;transform:scaleX(0.9913);">yyyy-01-dd</div>
<div class="t cal" style="left:156px;top:757px;transform:scaleX(0.9786);">usmf</div>
<div class="t cal" style="left:262px;top:757px;transform:scaleX(0.9340);">Ledger</div>
<div class="t cal" style="left:658px;top:757px;transform:scaleX(0.9993);">602180-001--022---</div>
<div class="t cal" style="left:844px;top:757px;transform:scaleX(0.9895);">Benefits</div>
<div class="t cal" style="left:985px;top:757px;transform:scaleX(0.8610);">USD</div>
<div class="a" style="left:35px;top:777px;width:1063px;height:23px;background:#ddebf7"></div>
<div class="hl" style="left:35px;top:800px;width:1063px;background:#9bc2e6"></div>
<div class="t cal" style="left:69px;top:781px;transform:scaleX(0.9913);">yyyy-01-dd</div>
<div class="t cal" style="left:156px;top:781px;transform:scaleX(0.9786);">usmf</div>
<div class="t cal" style="left:262px;top:781px;transform:scaleX(0.9340);">Ledger</div>
<div class="t cal" style="left:658px;top:781px;transform:scaleX(0.9993);">602120-002--026---</div>
<div class="t cal" style="left:844px;top:781px;transform:scaleX(0.9949);">Payroll Tax</div>
<div class="t cal" style="left:985px;top:781px;transform:scaleX(0.8610);">USD</div>
<div class="vl" style="left:152px;top:801px;height:23px"></div>
<div class="vl" style="left:257px;top:801px;height:23px"></div>
<div class="vl" style="left:443px;top:801px;height:23px"></div>
<div class="vl" style="left:653px;top:801px;height:23px"></div>
<div class="vl" style="left:839px;top:801px;height:23px"></div>
<div class="vl" style="left:980px;top:801px;height:23px"></div>
<div class="hl" style="left:35px;top:824px;width:1063px;background:#9bc2e6"></div>
<div class="t cal" style="left:69px;top:805px;transform:scaleX(0.9913);">yyyy-01-dd</div>
<div class="t cal" style="left:156px;top:805px;transform:scaleX(0.9786);">usmf</div>
<div class="t cal" style="left:262px;top:805px;transform:scaleX(0.9340);">Ledger</div>
<div class="t cal" style="left:658px;top:805px;transform:scaleX(0.9993);">602120-002--025---</div>
<div class="t cal" style="left:844px;top:805px;transform:scaleX(0.9949);">Payroll Tax</div>
<div class="t cal" style="left:985px;top:805px;transform:scaleX(0.8610);">USD</div>
<div class="a" style="left:35px;top:825px;width:1063px;height:23px;background:#ddebf7"></div>
<div class="hl" style="left:35px;top:848px;width:1063px;background:#9bc2e6"></div>
<div class="t cal" style="left:69px;top:829px;transform:scaleX(0.9913);">yyyy-01-dd</div>
<div class="t cal" style="left:156px;top:829px;transform:scaleX(0.9786);">usmf</div>
<div class="t cal" style="left:262px;top:829px;transform:scaleX(0.9340);">Ledger</div>
<div class="t cal" style="left:658px;top:829px;transform:scaleX(0.9993);">602120-002--024---</div>
<div class="t cal" style="left:844px;top:829px;transform:scaleX(0.9949);">Payroll Tax</div>
<div class="t cal" style="left:985px;top:829px;transform:scaleX(0.8610);">USD</div>
<div class="vl" style="left:1097px;top:259px;height:574px;background:#ababab"></div>
<div class="a" style="left:1px;top:296px;width:483px;height:133px;background:#ffff00;mix-blend-mode:multiply"></div>
<div class="a" style="left:1101px;top:237px;width:19px;height:596px;background:#dadada"></div>
<div class="a" style="left:1101px;top:237px;width:19px;height:19px;background:#fff;border:1px solid #c6c6c6"></div>
<svg width="9" height="5" viewBox="0 0 9 5" style="left:1106px;top:244px"><path d="M0 5h9l-4.500-5z" fill="#666"/></svg>
<div class="a" style="left:1101px;top:256px;width:19px;height:257px;background:#fff;border:1px solid #ababab"></div>
<div class="a" style="left:1101px;top:815px;width:19px;height:18px;background:#fff;border:1px solid #c6c6c6"></div>
<svg width="9" height="5" viewBox="0 0 9 5" style="left:1106px;top:822px"><path d="M0 0h9l-4.500 5z" fill="#666"/></svg>
</div>
<!-- ===== sheet tabs / hscroll ===== -->
<div class="a" style="left:0;top:833px;width:1120px;height:29px;background:#e6e6e6;border-top:1px solid #c6c6c6"></div>
<svg width="6" height="10" viewBox="0 0 6 10" style="left:28px;top:843px"><path d="M6 0v10L0 5z" fill="#c8c8c8"/></svg>
<svg width="6" height="10" viewBox="0 0 6 10" style="left:57px;top:843px"><path d="M0 0v10l6-5z" fill="#c8c8c8"/></svg>
<div class="a" style="left:103px;top:833px;width:80px;height:26px;background:#fff;border-bottom:2px solid #217346;border-left:1px solid #d0d0d0;border-right:1px solid #d0d0d0"></div>
<div class="t" style="left:115px;top:836px;font-size:16.5px;font-weight:bold;color:#217346;letter-spacing:-0.018px;">Sheet1</div>
<div class="t" style="left:195px;top:836px;font-size:16.5px;color:#444;letter-spacing:-0.033px;">data_cache</div>
<div class="a" style="left:292px;top:838px;width:1px;height:19px;background:#ababab"></div>
<svg width="21" height="21" viewBox="0 0 21 21" style="left:326px;top:837px"><circle cx="10.500" cy="10.500" r="9" fill="none" stroke="#777" stroke-width="1.200"/><path d="M10.500 5.500v10M5.500 10.500h10" stroke="#777" stroke-width="1.500"/></svg>
<div class="a" style="left:559px;top:841px;width:2px;height:2px;background:#a8a8a8;box-shadow:0 4px #a8a8a8,0 8px #a8a8a8"></div>
<div class="a" style="left:577px;top:838px;width:521px;height:20px;background:#dadada"></div>
<div class="a" style="left:577px;top:838px;width:19px;height:20px;background:#fff;border:1px solid #c6c6c6"></div>
<svg width="5" height="9" viewBox="0 0 5 9" style="left:583px;top:843px"><path d="M5 0v9L0 4.500z" fill="#666"/></svg>
<div class="a" style="left:596px;top:838px;width:227px;height:20px;background:#fff;border:1px solid #ababab"></div>
<div class="a" style="left:1079px;top:838px;width:19px;height:20px;background:#fff;border:1px solid #c6c6c6"></div>
<svg width="5" height="9" viewBox="0 0 5 9" style="left:1086px;top:843px"><path d="M0 0v9l5-4.500z" fill="#666"/></svg>
<!-- ===== task pane ===== -->
<div class="a" style="left:1123px;top:237px;width:1px;height:625px;background:#c6c6c6"></div>
<div class="t" style="left:1138px;top:252.5px;font-size:25px;color:#217346;-webkit-text-stroke:.7px #e6e6e6;letter-spacing:0.456px;">Microsoft Dynamics Office Ad...</div>
<svg width="10" height="6" viewBox="0 0 10 6" style="left:1513px;top:257px"><path d="M0 0h10l-5 5.500z" fill="#666"/></svg>
<svg width="12" height="12" viewBox="0 0 12 12" style="left:1534px;top:253px"><path d="M.8 .8 11.200 11.200M11.200 .8 .8 11.200" stroke="#555" stroke-width="1.700"/></svg>
<div class="a" style="left:1138px;top:318px;width:407px;height:528px;background:#fff;border:1px solid #c6c6c6;border-top:0"></div>
<div class="a" style="left:1139px;top:282px;width:405px;height:36px;background:#217346"></div>
<div class="a" style="left:1139px;top:282px;width:149px;height:36px;border:1px dotted #fff"></div>
<div class="t" style="left:1152px;top:292px;font-size:17px;font-weight:bold;color:#fff;letter-spacing:-0.113px;">Data Connector</div>
<svg width="14" height="14" viewBox="0 0 14 14" style="left:1377px;top:294px"><g fill="#fff"><circle cx="7" cy="7" r="4.900"/><rect x="5.800" y="0.300" width="2.400" height="13.400" transform="rotate(0 7 7)"/><rect x="5.800" y="0.300" width="2.400" height="13.400" transform="rotate(45 7 7)"/><rect x="5.800" y="0.300" width="2.400" height="13.400" transform="rotate(90 7 7)"/><rect x="5.800" y="0.300" width="2.400" height="13.400" transform="rotate(135 7 7)"/></g><circle cx="7" cy="7" r="2.100" fill="#217346"/></svg>
<div class="t" style="left:1408px;top:293px;font-size:15.500px;color:#fff;letter-spacing:-0.355px;">Ludwig.Reinhard</div>
<svg width="11" height="6" viewBox="0 0 11 6" style="left:1525px;top:298px"><path d="M0 0h11l-5.500 6z" fill="#fff"/></svg>
<svg width="14" height="8" viewBox="0 0 14 8" style="left:1155px;top:338px"><path d="M0 .5h2M0 2.500h2M0 4.500h2M0 6.500h2M3.500 .5h9.500M3.500 2.500h9.500M3.500 4.500h9.500M3.500 6.500h9.500" stroke="#333" stroke-width="1"/></svg>
<svg width="14" height="8" viewBox="0 0 14 8" style="left:1155px;top:358px"><path d="M0 .5h2M0 2.500h2M0 4.500h2M0 6.500h2M3.500 .5h9.500M3.500 2.500h9.500M3.500 4.500h9.500M3.500 6.500h9.500" stroke="#333" stroke-width="1"/></svg>
<div class="t" style="left:1182px;top:334px;font-size:15px;color:#333;letter-spacing:-0.088px;">Source: Ledger journal table</div>
<div class="t" style="left:1182px;top:354px;font-size:15px;color:#333;letter-spacing:-0.105px;">Field: Description</div>
<div class="a" style="left:1152px;top:378px;width:380px;height:2px;background:#ebebeb"></div>
<div class="a" style="left:1152px;top:636px;width:380px;height:2px;background:#ebebeb"></div>
<svg width="15" height="15" viewBox="0 0 15 15" style="left:1166px;top:652px"><path d="M7.500 0v15M0 7.500h15" stroke="#c8c8c8" stroke-width="2.400"/></svg>
<div class="t" style="left:1195px;top:652px;font-size:15px;color:#c4c4c4;letter-spacing:-0.005px;">New</div>
<svg width="16" height="17" viewBox="0 0 16 17" style="left:1165px;top:677px"><path d="M10 3.400A6.200 6.200 0 1 0 14.200 9.500" fill="none" stroke="#111" stroke-width="2.100"/><path d="M7.500 0 12 3.600 7.500 7z" fill="#111"/></svg>
<div class="t" style="left:1195px;top:679px;font-size:15px;color:#222;letter-spacing:-0.504px;">Refresh</div>
<svg width="24" height="16" viewBox="0 0 24 16" style="left:1161px;top:706px"><path d="M0 3h6.500M2 7h5M3.500 11h4" stroke="#111" stroke-width="1.700"/><path d="M9.500 1h8l4.500 4.500v9.500h-12.500z" fill="none" stroke="#111" stroke-width="1.600"/><path d="M17 1v5h5" fill="none" stroke="#111" stroke-width="1.400"/></svg>
<div class="t" style="left:1195px;top:707px;font-size:15px;color:#222;letter-spacing:-0.172px;">Publish</div>
<svg width="15" height="14" viewBox="0 0 15 14" style="left:1166px;top:735px"><path d="M0 .3h14.600l-6 6.700v5.500l-2.400 1.400v-6.900z" fill="#111"/></svg>
<div class="t" style="left:1195px;top:734px;font-size:15px;color:#222;letter-spacing:-0.057px;">Filter</div>
<svg width="19" height="16" viewBox="0 0 19 16" style="left:1164px;top:761px"><path d="M0 0v12.500h16.500zM2.500 6v4h5.500z" fill="#111" fill-rule="evenodd"/><path d="M1 13.500h17v2h-17z" fill="none" stroke="#111" stroke-width=".8"/><path d="M4 13.500v1M7 13.500v1M10 13.500v1M13 13.500v1M16 13.500v1" stroke="#111" stroke-width=".7"/></svg>
<div class="t" style="left:1195px;top:762px;font-size:15px;color:#222;letter-spacing:-0.117px;">Design</div>
<div class="a" style="left:1152px;top:800px;width:380px;height:2px;background:#ebebeb"></div>
<svg width="10" height="12" viewBox="0 0 10 12" style="left:1513px;top:817px"><path d="M.5 0v12" stroke="#111" stroke-width="1"/><path d="M2.500 1 9.500 4.200 2.500 7.500z" fill="#111"/></svg>
<!-- ===== status bar ===== -->
<div class="a" style="left:0;top:862px;width:1561px;height:28px;background:#f1f1f1;border-top:1px solid #c6c6c6"></div>
<div class="t" style="left:8px;top:870px;font-size:12.500px;color:#555;letter-spacing:0.057px;">Bereit</div>
<div class="a" style="left:1205px;top:863px;width:41px;height:27px;background:#c8c8c8"></div>
<svg width="13" height="13" viewBox="0 0 13 13" style="left:1218px;top:868px"><path d="M.5 .5h12v12h-12zM4.500 .5v12M8.500 .5v12M.5 4.500h12M.5 8.500h12" fill="none" stroke="#555"/></svg>
<svg width="14" height="13" viewBox="0 0 14 13" style="left:1259px;top:868px"><path d="M.5 .5h13v12h-13z" fill="none" stroke="#666"/><path d="M3.500 3.500h7v7h-7z" fill="none" stroke="#666"/><path d="M5 5.500h4M5 7.500h4" stroke="#666" stroke-width=".8"/></svg>
<svg width="14" height="13" viewBox="0 0 14 13" style="left:1300px;top:868px"><path d="M.5 .5h13v12h-13z" fill="none" stroke="#666"/><path d="M.5 7.500h8.500v-7M4.500 .5v7" fill="none" stroke="#666"/></svg>
<div class="a" style="left:1333px;top:874px;width:9px;height:2px;background:#555"></div>
<div class="a" style="left:1346px;top:875px;width:125px;height:1px;background:#a0a0a0"></div>
<div class="a" style="left:1406px;top:868px;width:5px;height:14px;background:#666"></div>
<svg width="11" height="11" viewBox="0 0 11 11" style="left:1475px;top:870px"><path d="M5.500 0v11M0 5.500h11" stroke="#555" stroke-width="1.700"/></svg>
<div class="t" style="left:1504px;top:870px;font-size:12.500px;color:#555;letter-spacing:-0.091px;">100 %</div>
<!-- window border -->
<div class="a" style="left:0;top:889px;width:1561px;height:1px;background:#217346"></div>
<div class="a" style="left:0;top:890px;width:1561px;height:2px;background:#c9c9c9"></div>
<div class="a" style="left:1559px;top:69px;width:1px;height:821px;background:#217346"></div>
<div class="a" style="left:1560px;top:69px;width:1px;height:821px;background:#7aa68e"></div>
</body>
</html>
